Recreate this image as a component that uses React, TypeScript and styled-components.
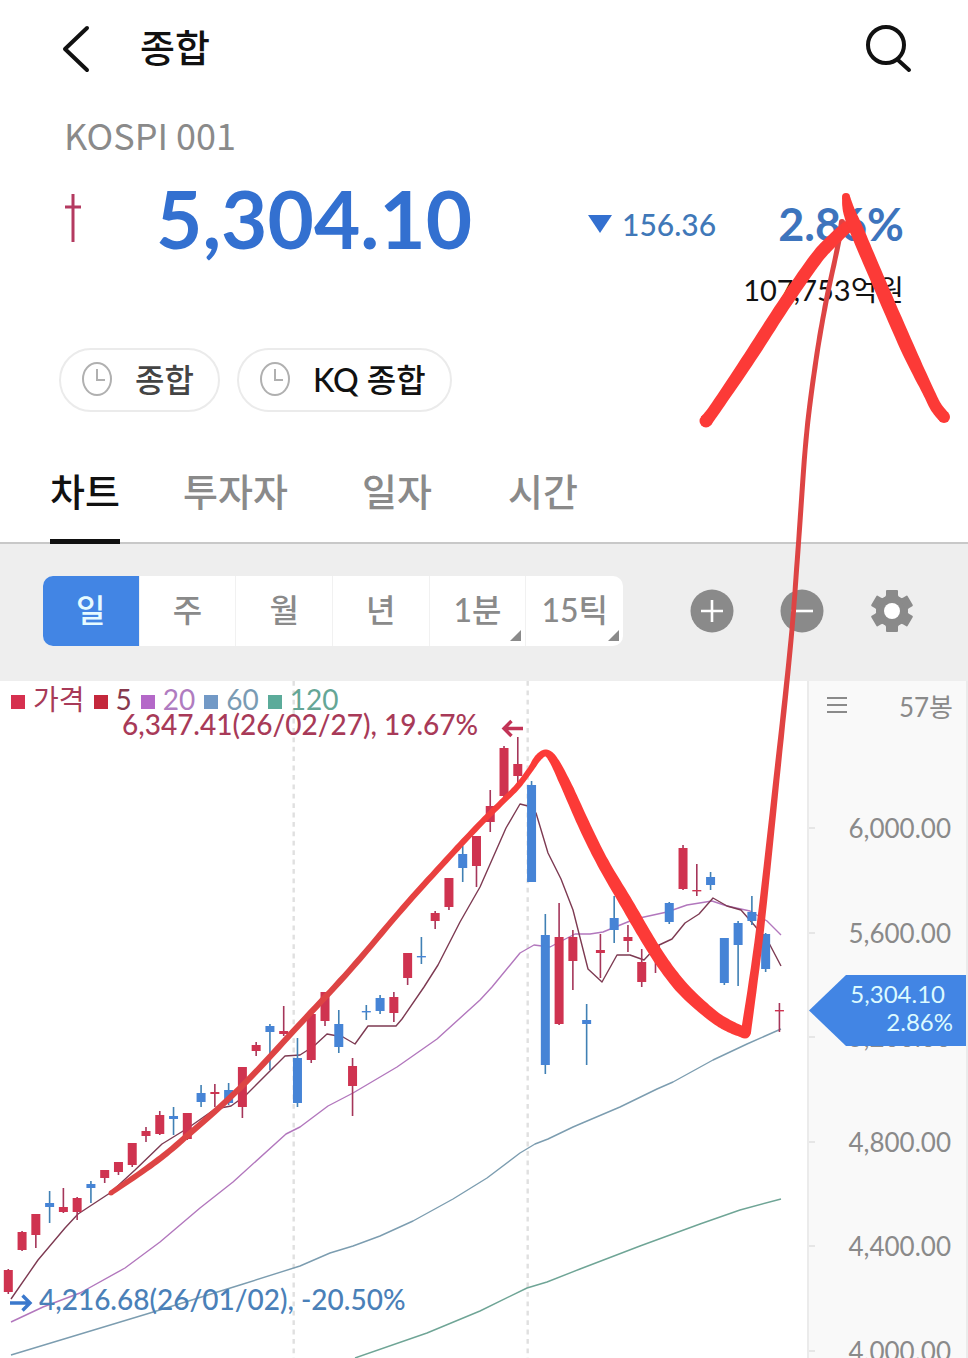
import React, { useState } from "react";
import styled, { createGlobalStyle } from "styled-components";

const color = {
  ink: "#111111",
  gray: "#8a8a8a",
  blue: "#3370d0",
  blueText: "#4078b8",
  blueFill: "#4285e4",
  red: "#cf3350",
  darkRed: "#7d3a52",
  violet: "#b277bd",
  steel: "#7c9db0",
  green: "#6fa596",
  marker: "#fc3a37",
  markerThin: "#dd4444",
};

const GlobalStyle = createGlobalStyle`
  *, *::before, *::after { box-sizing: border-box; }
  body {
    margin: 0;
    background: #ffffff;
    color: ${color.ink};
    font-family: Lato, "Noto Sans CJK KR", sans-serif;
  }
  button { font: inherit; color: inherit; background: none; border: 0; padding: 0; cursor: pointer; }
  svg { display: block; }
`;

const Page = styled.div`
  position: relative;
  overflow: hidden;
`;

const Header = styled.header`
  display: flex;
  align-items: center;
  height: 98px;
  padding: 0 54px 0 60px;
`;

const Title = styled.h1`
  flex: 1;
  margin: 0 0 4px 48px;
  font-size: 38px;
  line-height: 56px;
  font-weight: 500;
`;

const Summary = styled.section`
  padding: 16px 64px 0;
`;

const Code = styled.p`
  margin: 0;
  font-size: 36px;
  line-height: 40px;
  font-weight: 400;
  font-family: "Noto Sans CJK KR", sans-serif;
  color: ${color.gray};
`;

const PriceRow = styled.div`
  display: flex;
  align-items: center;
  height: 96px;
  margin-top: 16px;
  color: ${color.blue};
`;

const Price = styled.strong`
  flex: 1;
  margin-left: 74px;
  font-size: 80px;
  line-height: 96px;
  font-weight: 700;
`;

const Change = styled.span`
  display: flex;
  align-items: center;
  gap: 10px;
  padding-top: 12px;
  font-size: 30px;
  line-height: 40px;
  font-weight: 500;
  color: ${color.blueText};
`;

const Rate = styled.strong`
  margin-left: 62px;
  padding-top: 12px;
  font-size: 45px;
  line-height: 52px;
  font-weight: 700;
  color: #3d74bd;
`;

const Volume = styled.p`
  margin: 6px 0 0;
  font-size: 29px;
  line-height: 36px;
  text-align: right;
`;

const Chips = styled.nav`
  display: flex;
  gap: 17px;
  padding: 40px 59px 0;
`;

const Chip = styled.button<{ $muted?: boolean }>`
  display: flex;
  align-items: center;
  gap: 22px;
  height: 64px;
  padding: 0 24px 4px 20px;
  border: 2px solid #ebebeb;
  border-radius: 32px;
  font-size: 32px;
  font-weight: 500;
  color: ${(p) => (p.$muted ? "#444444" : color.ink)};
`;

const Tabs = styled.div`
  display: grid;
  grid-template-columns: 133px 179px 146px auto;
  justify-content: start;
  height: 132px;
  padding-left: 50px;
  border-bottom: 2px solid #c8c8c8;
`;

const Tab = styled.button<{ $active: boolean }>`
  position: relative;
  justify-self: start;
  padding-top: 28px;
  font-size: 38px;
  line-height: 56px;
  font-weight: 500;
  color: ${(p) => (p.$active ? color.ink : color.gray)};

  &::after {
    content: "";
    display: ${(p) => (p.$active ? "block" : "none")};
    position: absolute;
    left: 0;
    right: 0;
    bottom: -2px;
    height: 5px;
    background: ${color.ink};
  }
`;

const Toolbar = styled.div`
  display: flex;
  align-items: center;
  justify-content: space-between;
  height: 137px;
  padding: 0 54px 3px 43px;
  background: #eeeeee;
`;

const Periods = styled.div`
  display: grid;
  grid-template-columns: repeat(6, 1fr);
  width: 580px;
  height: 70px;
  border-radius: 10px;
  overflow: hidden;
  background: #ffffff;
`;

const Period = styled.button<{ $active: boolean; $more?: boolean }>`
  position: relative;
  padding-bottom: 2px;
  border-right: 1px solid #f1f1f1;
  font-size: 32px;
  line-height: 48px;
  font-weight: 500;
  color: ${(p) => (p.$active ? "#e6fbff" : color.gray)};
  background: ${(p) => (p.$active ? color.blueFill : "transparent")};

  &:last-child { border-right: 0; }

  &::after {
    content: "";
    display: ${(p) => (p.$more ? "block" : "none")};
    position: absolute;
    right: 4px;
    bottom: 5px;
    border-left: 11px solid transparent;
    border-bottom: 11px solid ${color.gray};
  }
`;

const Tools = styled.div`
  display: flex;
  gap: 46px;
`;

const Chart = styled.main`
  display: flex;
  align-items: stretch;
`;

const Plot = styled.div`
  position: relative;
  flex: 1;
  min-width: 0;

  > svg { width: 100%; height: auto; }
`;

const Legend = styled.ul`
  position: absolute;
  top: 0;
  left: 11px;
  display: flex;
  gap: 9px;
  margin: 0;
  padding: 0;
  list-style: none;
  font-size: 28px;
  line-height: 36px;
`;

const LegendItem = styled.li<{ $color: string; $mark: string }>`
  display: flex;
  align-items: center;
  gap: 8px;
  color: ${(p) => p.$color};

  &::before {
    content: "";
    width: 14px;
    height: 14px;
    margin-top: 6px;
    background: ${(p) => p.$mark};
  }
`;

const Axis = styled.aside`
  position: relative;
  width: 161px;
  overflow: hidden;
  border-left: 2px solid #ebebeb;
  border-right: 2px solid #ebebeb;
  background: #f9f9f9;
  color: ${color.gray};
`;

const AxisBody = styled.div`
  position: absolute;
  inset: 0;
`;

const AxisHead = styled.div`
  display: flex;
  align-items: center;
  justify-content: space-between;
  height: 48px;
  margin-bottom: 47px;
  padding: 0 13px 0 18px;
  font-size: 26px;
`;

const AxisScale = styled.ol`
  display: flex;
  flex-direction: column;
  height: 627px;
  margin: 0;
  padding: 0;
  list-style: none;
`;

const AxisLabel = styled.li`
  flex: 1;
  display: flex;
  align-items: center;
  justify-content: space-between;
  padding-right: 15px;
  font-size: 26px;
  line-height: 32px;

  &::before {
    content: "";
    width: 6px;
    height: 2px;
    background: #e6e6e6;
  }
`;

const PriceTag = styled.div`
  position: absolute;
  top: 294px;
  left: 0;
  right: 0;
  height: 71px;
  padding: 5px 13px 0 0;
  background: ${color.blueFill};
  clip-path: polygon(0 50%, 37px 0, 100% 0, 100% 100%, 37px 100%);
  color: #dcfaff;
  font-size: 24px;
  line-height: 28px;
  text-align: right;

  > span { display: block; }
  > span:first-child { padding-right: 8px; }
`;

const Drawing = styled.svg`
  position: absolute;
  top: 0;
  left: 0;
  width: 100%;
  height: auto;
  pointer-events: none;
`;

/* [up, wick top, body top, body bottom, wick bottom] */
type Candle = [boolean, number, number, number, number];
const U = true;
const D = false;
const candles: Candle[] = [
  [U, 1269, 1270, 1292, 1294], [U, 1231, 1232, 1250, 1251], [U, 1214, 1214, 1235, 1248],
  [D, 1191, 1203, 1207, 1223], [U, 1188, 1207, 1212, 1213], [U, 1197, 1198, 1212, 1220],
  [D, 1181, 1184, 1188, 1203], [U, 1170, 1170, 1178, 1183], [U, 1162, 1162, 1172, 1175],
  [U, 1143, 1143, 1165, 1167], [U, 1127, 1131, 1136, 1142], [U, 1111, 1115, 1134, 1135],
  [D, 1107, 1116, 1119, 1135], [U, 1113, 1113, 1139, 1140], [D, 1085, 1093, 1102, 1107],
  [U, 1084, 1092, 1094, 1107], [D, 1083, 1090, 1103, 1105], [U, 1067, 1067, 1107, 1118],
  [U, 1042, 1045, 1051, 1056], [D, 1024, 1026, 1032, 1070], [U, 1006, 1031, 1034, 1036],
  [D, 1038, 1058, 1103, 1107], [U, 1014, 1014, 1060, 1063], [U, 992, 992, 1021, 1026],
  [D, 1010, 1024, 1047, 1053], [U, 1058, 1066, 1086, 1116], [D, 1005, 1011, 1012, 1020],
  [D, 995, 998, 1011, 1014], [U, 992, 997, 1013, 1022], [U, 953, 953, 978, 985],
  [D, 937, 956, 957, 964], [U, 911, 913, 921, 929], [U, 878, 878, 907, 910],
  [D, 846, 854, 868, 882], [U, 836, 836, 866, 887], [U, 790, 806, 822, 832],
  [U, 746, 748, 796, 798], [U, 737, 764, 776, 783], [D, 781, 785, 882, 882],
  [D, 914, 935, 1065, 1074], [U, 903, 937, 1024, 1025], [U, 930, 937, 961, 990],
  [D, 1004, 1020, 1024, 1065], [U, 934, 950, 953, 978], [D, 896, 918, 930, 943],
  [U, 925, 937, 941, 952], [U, 949, 962, 982, 987], [U, 943, 945, 957, 973],
  [D, 902, 903, 922, 924], [U, 845, 848, 889, 890], [U, 864, 890, 891, 896],
  [D, 872, 877, 885, 890], [D, 938, 938, 983, 985], [D, 921, 923, 945, 986],
  [D, 896, 912, 921, 925], [D, 933, 934, 969, 972], [U, 1003, 1010, 1011, 1032],
];

const averages = [
  {
    stroke: color.steel,
    points: "11,1355 150,1313 240,1285 300,1266 330,1253 353,1246 380,1236 413,1221 453,1199 487,1178 520,1153 535,1144 548,1139 573,1127 580,1124 620,1107 657,1089 673,1082 713,1060 747,1044 781,1029",
  },
  {
    stroke: color.green,
    points: "355,1358 427,1333 480,1311 527,1288 547,1282 580,1269 640,1246 700,1224 740,1210 781,1199",
  },
  {
    stroke: color.violet,
    points: "11,1322 43,1307 80,1293 125,1268 160,1242 200,1208 233,1182 286,1134 300,1127 328,1106 353,1093 397,1067 437,1039 480,1000 492,987 520,953 534,945 550,947 575,934 590,934 603,932 635,919 667,912 687,905 712,901 727,906 750,911 767,921 781,935",
  },
  {
    stroke: color.darkRed,
    points: "11,1299 38,1260 65,1228 78,1214 110,1193 135,1170 162,1144 188,1128 215,1109 231,1106 245,1096 285,1056 300,1055 314,1046 327,1034 343,1037 355,1044 368,1026 396,1026 402,1019 424,987 438,965 460,922 480,887 506,828 520,804 528,806 536,813 548,853 561,879 573,910 588,969 602,982 617,955 630,955 644,960 657,946 672,939 685,923 699,914 713,898 727,906 741,910 755,926 770,945 781,966",
  },
];

/* Marker strokes: [x, y, stroke width] along the pen's path. */
type PenPoint = [number, number, number];

function penStroke(points: PenPoint[]): string {
  const samples: PenPoint[] = [];
  const steps = 10;
  for (let i = 0; i < points.length - 1; i++) {
    const a = points[Math.max(0, i - 1)];
    const b = points[i];
    const c = points[i + 1];
    const d = points[Math.min(points.length - 1, i + 2)];
    for (let s = 0; s < steps; s++) {
      const t = s / steps;
      samples.push([0, 1, 2].map((k) =>
        0.5 * (2 * b[k] + (c[k] - a[k]) * t + (2 * a[k] - 5 * b[k] + 4 * c[k] - d[k]) * t * t
          + (3 * b[k] - a[k] - 3 * c[k] + d[k]) * t * t * t)) as PenPoint);
    }
  }
  samples.push(points[points.length - 1]);
  const left: string[] = [];
  const right: string[] = [];
  samples.forEach(([x, y, w], i) => {
    const p = samples[Math.max(0, i - 1)];
    const n = samples[Math.min(samples.length - 1, i + 1)];
    const len = Math.hypot(n[0] - p[0], n[1] - p[1]) || 1;
    const nx = (-(n[1] - p[1]) / len) * (w / 2);
    const ny = ((n[0] - p[0]) / len) * (w / 2);
    left.push(`${(x + nx).toFixed(1)},${(y + ny).toFixed(1)}`);
    right.unshift(`${(x - nx).toFixed(1)},${(y - ny).toFixed(1)}`);
  });
  return `M${left.join("L")}L${right.join("L")}Z`;
}

const penLines: { points: PenPoint[]; fill: string }[] = [
  { fill: "url(#stemInk)", points: [[746, 1032, 10], [760, 930, 8], [778, 765, 6], [791, 640, 5], [798, 550, 5], [806, 440, 5], [815, 367, 5], [825, 307, 5], [837, 250, 5], [842, 222, 6]] },
  { fill: "url(#riseInk)", points: [[111, 1193, 5], [150, 1166, 6], [180, 1142, 6], [240, 1088, 6], [300, 1024, 6], [350, 970, 6], [403, 908, 6], [450, 856, 6], [480, 824, 6], [500, 804, 6], [517, 787, 6], [530, 770, 6], [538, 758, 7], [546, 753, 7], [554, 761, 9], [567, 787, 11], [585, 827, 12], [603, 863, 12], [627, 904, 13], [648, 940, 13], [667, 969, 13], [687, 993, 13], [713, 1016, 12], [729, 1026, 12], [745, 1033, 11]] },
  { fill: color.marker, points: [[706, 421, 13], [717, 406, 12], [750, 357, 13], [783, 306, 13], [815, 260, 13], [830, 243, 13], [847, 227, 12]] },
  { fill: color.marker, points: [[846, 197, 8], [849, 211, 12], [857, 231, 14], [877, 278, 14], [907, 347, 14], [928, 391, 12], [936, 407, 12], [944, 417, 12]] },
];

const legend = [
  { label: "가격", color: "#a83a58", mark: "#d6304f" },
  { label: "5", color: "#86394d", mark: "#c4283c" },
  { label: "20", color: "#b07cc0", mark: "#b468c8" },
  { label: "60", color: "#7a9bb4", mark: "#7299c6" },
  { label: "120", color: "#65a696", mark: "#5bab9a" },
];

const scale = ["6,000.00", "5,600.00", "5,200.00", "4,800.00", "4,400.00", "4,000.00"];
const tabs = ["차트", "투자자", "일자", "시간"];
const periods = [
  { label: "일" }, { label: "주" }, { label: "월" }, { label: "년" },
  { label: "1분", more: true }, { label: "15틱", more: true },
];

const ClockIcon = () => (
  <svg width="32" height="36" viewBox="0 0 32 36" fill="none" stroke="#b0b0b0" strokeWidth="2" aria-hidden="true">
    <ellipse cx="16" cy="19" rx="14" ry="16" />
    <path d="M16 9v11h8" />
  </svg>
);

const BackIcon = () => (
  <svg width="32" height="50" viewBox="0 0 32 50" fill="none" stroke={color.ink} strokeWidth="4" strokeLinecap="round" strokeLinejoin="round" aria-hidden="true">
    <path d="M27 4 5 25l22 21" />
  </svg>
);

const SearchIcon = () => (
  <svg width="50" height="50" viewBox="0 0 50 50" fill="none" stroke={color.ink} strokeWidth="4" strokeLinecap="round" aria-hidden="true">
    <circle cx="22" cy="21" r="18" />
    <path d="m34 36 11 10" />
  </svg>
);

const ZoomIcon = ({ plus }: { plus?: boolean }) => (
  <svg width="44" height="44" viewBox="0 0 44 44" aria-hidden="true">
    <circle cx="22" cy="22" r="21.5" fill={color.gray} />
    <path d={plus ? "M11 22h22M22 11v22" : "M11 22h22"} stroke="#ffffff" strokeWidth="2.6" />
  </svg>
);

const GearIcon = () => (
  <svg width="44" height="44" viewBox="0 0 44 44" fill={color.gray} aria-hidden="true">
    <circle cx="22" cy="22" r="16" />
    {[0, 60, 120, 180, 240, 300].map((angle) => (
      <path key={angle} d="M14 9Q16 8 16 6V2Q16 1 17 1H27Q28 1 28 2V6Q28 8 30 9Z" transform={`rotate(${angle} 22 22)`} />
    ))}
    <circle cx="22" cy="22" r="8" fill="#ffffff" />
  </svg>
);

const CandleMark = () => (
  <svg width="18" height="50" viewBox="0 0 18 50" stroke="#b43a60" strokeWidth="3" aria-hidden="true">
    <path d="M9 1v48M1 14h16" />
  </svg>
);

const PlotDrawing = () => (
  <svg viewBox="0 681 807 677" role="img" aria-label="KOSPI 일봉 차트">
    <g stroke="#e0e0e0" strokeWidth="2.4" strokeDasharray="4.8 4.6">
      <path d="M293.7 681V1358M527.7 681V1358" />
    </g>
    {averages.map((line) => (
      <polyline key={line.stroke} points={line.points} fill="none" stroke={line.stroke} strokeWidth="1.4" strokeLinejoin="round" />
    ))}
    {candles.map(([up, high, top, bottom, low], i) => {
      const x = 8.3 + i * 13.77;
      const thin = bottom - top < 2;
      return (
        <g key={i} fill={up ? color.red : "#4684d6"}>
          <rect x={x - 0.8} y={high} width="1.6" height={low - high} fill={up ? "#a5365a" : "#4080b4"} />
          <rect x={x - 4.5} y={top} width="9" height={thin ? 1.4 : bottom - top} />
        </g>
      );
    })}
    <g fontFamily="Lato, sans-serif" fontSize="28" fontWeight="500">
      <text x="122" y="735" fill="#a83a58">6,347.41(26/02/27), 19.67%</text>
      <text x="39" y="1310" fill="#4a80b8">4,216.68(26/01/02), -20.50%</text>
    </g>
    <g fill="none" strokeWidth="3.4">
      <path d="M523 728.5H505M511.5 721l-7.5 7.5 7.5 7.5" stroke="#c23356" />
      <path d="M10 1303H29M22.5 1295.5l7.5 7.5-7.5 7.5" stroke="#3b78cc" />
    </g>
  </svg>
);

const PenDrawing = () => (
  <Drawing viewBox="0 0 968 1358" aria-hidden="true">
    <defs>
      <linearGradient id="stemInk" gradientUnits="userSpaceOnUse" x1="0" y1="1032" x2="0" y2="700">
        <stop offset="0" stopColor={color.marker} />
        <stop offset="1" stopColor={color.markerThin} />
      </linearGradient>
      <linearGradient id="riseInk" gradientUnits="userSpaceOnUse" x1="100" y1="0" x2="540" y2="0">
        <stop offset="0.6" stopColor={color.markerThin} />
        <stop offset="1" stopColor={color.marker} />
      </linearGradient>
    </defs>
    {penLines.map(({ points, fill }, i) => {
      const ends = [points[0], points[points.length - 1]];
      return (
        <g key={i} fill={fill}>
          <path d={penStroke(points)} />
          {ends.map(([x, y, w]) => <circle key={`${x}-${y}`} cx={x} cy={y} r={w / 2} />)}
        </g>
      );
    })}
  </Drawing>
);

export default function App() {
  const [tab, setTab] = useState(0);
  const [period, setPeriod] = useState(0);

  return (
    <Page>
      <GlobalStyle />
      <Header>
        <button aria-label="뒤로"><BackIcon /></button>
        <Title>종합</Title>
        <button aria-label="검색"><SearchIcon /></button>
      </Header>

      <Summary>
        <Code>KOSPI 001</Code>
        <PriceRow>
          <CandleMark />
          <Price>5,304.10</Price>
          <Change>
            <svg width="24" height="18" viewBox="0 0 24 18" fill={color.blue} aria-hidden="true"><path d="M0 0h24L12 18z" /></svg>
            156.36
          </Change>
          <Rate>2.86%</Rate>
        </PriceRow>
        <Volume>107,753억원</Volume>
      </Summary>

      <Chips>
        <Chip $muted><ClockIcon />종합</Chip>
        <Chip><ClockIcon />KQ 종합</Chip>
      </Chips>

      <Tabs role="tablist">
        {tabs.map((label, i) => (
          <Tab key={label} role="tab" aria-selected={tab === i} $active={tab === i} onClick={() => setTab(i)}>{label}</Tab>
        ))}
      </Tabs>

      <Toolbar>
        <Periods>
          {periods.map(({ label, more }, i) => (
            <Period key={label} $active={period === i} $more={more} onClick={() => setPeriod(i)}>{label}</Period>
          ))}
        </Periods>
        <Tools>
          <button aria-label="확대"><ZoomIcon plus /></button>
          <button aria-label="축소"><ZoomIcon /></button>
          <button aria-label="설정"><GearIcon /></button>
        </Tools>
      </Toolbar>

      <Chart>
        <Plot>
          <PlotDrawing />
          <Legend>
            {legend.map((item) => (
              <LegendItem key={item.label} $color={item.color} $mark={item.mark}>{item.label}</LegendItem>
            ))}
          </Legend>
        </Plot>
        <Axis>
          <AxisBody>
            <AxisHead>
              <svg width="20" height="16" viewBox="0 0 20 16" stroke={color.gray} strokeWidth="2" aria-hidden="true"><path d="M0 1h20M0 8h20M0 15h20" /></svg>
              57봉
            </AxisHead>
            <AxisScale>
              {scale.map((value) => <AxisLabel key={value}>{value}</AxisLabel>)}
            </AxisScale>
          </AxisBody>
          <PriceTag><span>5,304.10</span><span>2.86%</span></PriceTag>
        </Axis>
      </Chart>

      <PenDrawing />
    </Page>
  );
}
